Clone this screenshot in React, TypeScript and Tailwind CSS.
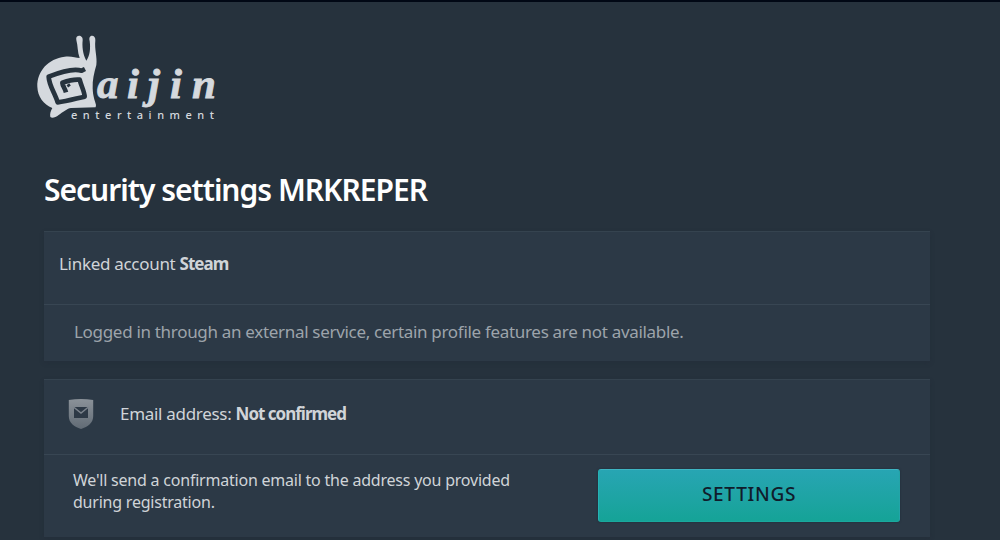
import type { ReactNode } from 'react';

function Logo() {
  return (
    <svg width="190" height="100" viewBox="0 0 190 100" className="block" fill="#d5d9de">
      <g transform="scale(0.33333)">
        {/* snail body and shell */}
        <path d="M139 45 C135 28 160 28 158 46 C156 62 158 88 169 107 C180 92 182 70 179 48 C173 27 198 27 196 46 C193 75 202 95 199 120 C192 145 187 165 188 190 C189 215 194 225 198 240 L197 247 L123 249 C112 250 98 262 86 270 C76 278 66 280 61 276 C59 267 62 258 67 249 C40 237 23 215 22 185 C21 138 55 101 104 95 C124 92 137 99 149 99 C142 82 144 62 139 45 Z" />
        {/* shell spiral */}
        <g fill="none" stroke="#26323d" strokeWidth="14" strokeLinejoin="round">
          <path d="M165 132 L155 137 C130 129 98 138 56 155 C57 182 75 205 83 232 C112 229 140 220 164 215 C163 198 154 184 149 164 C130 162 114 167 97 173 C98 184 105 190 108 202" />
          <path d="M112 184 L120 178" strokeWidth="8" />
        </g>
      </g>
      <text
        x="67 97 118 140 162"
        y="73"
        className="font-['Liberation_Serif',serif] text-[43px] font-bold italic"
        stroke="#d5d9de"
        strokeWidth="0.8"
      >
        aijin
      </text>
      <text
        x="41"
        y="94"
        textLength="143"
        className="font-['Noto_Sans',sans-serif] text-[11px] font-medium"
      >
        entertainment
      </text>
    </svg>
  );
}

function MailShield() {
  return (
    <svg width="26" height="32" viewBox="0 0 26 32" className="shrink-0">
      <defs>
        <linearGradient id="shield" x1="0" y1="0" x2="0" y2="1">
          <stop offset="0" stopColor="#8b9299" />
          <stop offset="1" stopColor="#616b75" />
        </linearGradient>
      </defs>
      <path d="M.8 2 Q13 -.2 25.200 2 V18 C25.200 25 20 28.500 13 31 C6 28.500 .8 25 .8 18 Z" fill="url(#shield)" />
      <path d="M6 9 H20 V20 H6 Z" fill="#2d3946" />
      <path d="M5.500 9 L13 15 L20.500 9" fill="none" stroke="#7b838c" strokeWidth="1.500" />
    </svg>
  );
}

function Card({ header, children }: { header: ReactNode; children: ReactNode }) {
  return (
    <section className="w-[886px] border-t border-[#35434f] bg-[#2c3946] shadow-[0_2px_5px_rgba(28,36,50,0.2)]">
      {header}
      <div className="border-t border-[#384653]">{children}</div>
    </section>
  );
}

export default function App() {
  return (
    <div className="h-[540px] w-[1000px] overflow-hidden border-t-2 border-[#010815] bg-[#26323d] font-['Noto_Sans',sans-serif] text-[#d0d4d8]">
      <header className="pt-[23px] pl-[30px]">
        <Logo />
      </header>

      <main className="pl-11">
        <h1 className="mt-[45px] h-[61px] text-[30px] leading-[40px] font-semibold tracking-[-1px] whitespace-nowrap text-white">
          Security settings MRKREPER
        </h1>

        <Card
          header={
            <div className="h-[72px] px-[15px] pt-[19px] text-[17px] leading-[26px] tracking-[-0.3px]">
              Linked account <b className="tracking-[-1px]">Steam</b>
            </div>
          }
        >
          <p className="h-14 px-[30px] pt-[14px] text-[17px] leading-[26px] tracking-[-0.31px] whitespace-nowrap text-[#9da4ab]">
            Logged in through an external service, certain profile features are not available.
          </p>
        </Card>

        <div className="mt-[18px]">
          <Card
            header={
              <div className="flex h-[74px] items-center gap-[26px] pb-[6px] pl-6 text-[17px] tracking-[-0.3px]">
                <MailShield />
                <span>
                  Email address: <b className="tracking-[-1px]">Not confirmed</b>
                </span>
              </div>
            }
          >
            <div className="flex h-[82px] justify-between pr-[30px] pl-[29px]">
              <p className="w-[470px] pt-[14px] text-[16px] leading-[22px] tracking-[-0.22px]">
                We'll send a confirmation email to the address you provided
                <br />
                during registration.
              </p>
              <button className="mt-[14px] h-[53px] w-[302px] rounded-[3px] border border-t-[#3eb5c2] border-r-[#23a5a8] border-b-[#1aa99d] border-l-[#25b2b5] bg-linear-to-b from-[#27a5b3] to-[#15a397] pb-[2px] text-[19px] font-medium tracking-[0.7px] text-[#101c2b] shadow-[0_0_2px_#1c2737]">
                SETTINGS
              </button>
            </div>
          </Card>
        </div>
      </main>
    </div>
  );
}
